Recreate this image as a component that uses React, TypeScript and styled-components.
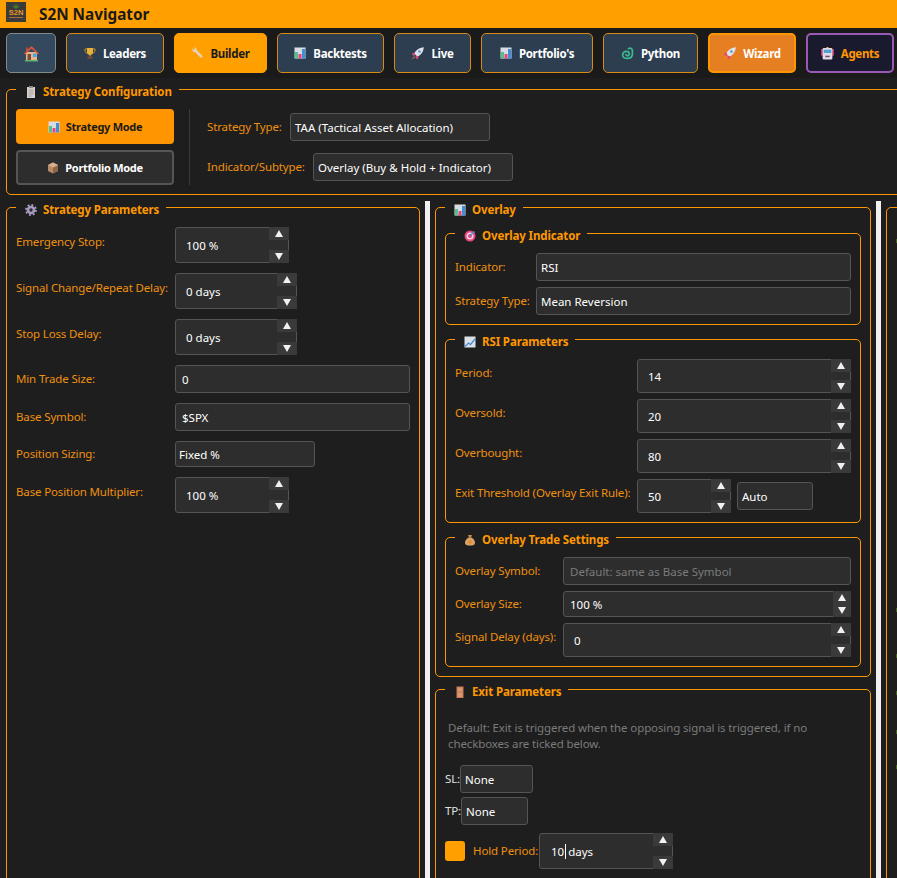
import React from 'react'
import styled, { createGlobalStyle } from 'styled-components'

const ORANGE = '#ff9800'
const FONT = `"Noto Sans", "Open Sans", Arial, sans-serif`

const GlobalStyle = createGlobalStyle`
    html, body {
        margin: 0;
        padding: 0;
        background: #1e1e1e;
        overflow: hidden;
    }
`

const Page = styled.div`
    width: 897px;
    height: 878px;
    overflow: hidden;
    background: #1e1e1e;
    font-family: ${FONT};
    font-size: 11.5px;
    color: #fff;
`

const Header = styled.header`
    height: 28px;
    box-sizing: border-box;
    background: #ff9f00;
    display: flex;
    align-items: flex-start;
    padding: 2px 0 0 6px;
    gap: 13px;
`

const Title = styled.h1`
    margin: 0;
    font-size: 15.3px;
    line-height: 24px;
    font-weight: 700;
    color: #1a1a1a;
`

const Nav = styled.nav`
    height: 50px;
    box-sizing: border-box;
    background: #1a1a1a;
    display: flex;
    padding: 5px 6px;
    gap: 10px;
`

const NavButton = styled.button<{ $w: number; $kind?: string }>`
    width: ${(p) => p.$w}px;
    flex: none;
    height: 40px;
    box-sizing: border-box;
    padding: 0;
    display: flex;
    align-items: center;
    justify-content: center;
    gap: 7px;
    font-family: ${FONT};
    font-size: 11.5px;
    letter-spacing: -0.3px;
    font-weight: 700;
    border-radius: 5px;
    border: 1px solid #d98a10;
    background: #2c3e50;
    color: #fff;
    ${(p) => p.$kind === 'home' && `background: #34495e; border-color: #7f8c8d;`}
    ${(p) => p.$kind === 'active' && `background: #ff9f00; border-color: #ff9f00; color: #1a1a1a;`}
    ${(p) => p.$kind === 'wizard' && `background: #e67e22; border: 2px solid #ff9800;`}
    ${(p) => p.$kind === 'agents' && `background: #1a1a2e; border: 2px solid #9b59b6; color: #ff9800;`}
`

const Content = styled.main`
    padding: 3px 0 0 6px;
`

const Group = styled.fieldset<{ $top?: number; $w?: number; $h?: number }>`
    margin: 0;
    min-width: 0;
    box-sizing: border-box;
    border: 1px solid ${ORANGE};
    border-radius: 5px;
    padding: ${(p) => p.$top ?? 12}px 9px 9px;
    ${(p) => p.$w && `width: ${p.$w}px;`}
    ${(p) => p.$h && `height: ${p.$h}px;`}
`

const Legend = styled.legend<{ $indent?: number }>`
    margin-left: ${(p) => p.$indent ?? 0}px;
    padding: 0 7px 0 9px;
    height: 16px;
    display: flex;
    align-items: center;
    gap: 6px;
    font-size: 11.5px;
    letter-spacing: -0.12px;
    line-height: 16px;
    font-weight: 700;
    color: ${ORANGE};
    white-space: nowrap;
    transform: translateY(3px);
`

const ConfigBody = styled.div`
    display: flex;
    align-items: stretch;
`

const ModeColumn = styled.div`
    width: 158px;
    display: flex;
    flex-direction: column;
    gap: 6px;
`

const ModeButton = styled.button<{ $on?: boolean }>`
    height: 35px;
    box-sizing: border-box;
    display: flex;
    align-items: center;
    justify-content: center;
    gap: 6px;
    font-family: ${FONT};
    font-size: 11px;
    letter-spacing: -0.3px;
    font-weight: 700;
    padding: 0;
    border-radius: 4px;
    border: ${(p) => (p.$on ? 'none' : '2px solid #555')};
    background: ${(p) => (p.$on ? '#ff9500' : '#2d2d2d')};
    color: ${(p) => (p.$on ? '#1a1a1a' : '#fff')};
`

const Divider = styled.div`
    width: 1px;
    background: #3a3a3a;
    margin: 0 17px 0 15px;
`

const ConfigForm = styled.div`
    display: flex;
    flex-direction: column;
    gap: 12px;
    padding-top: 4px;
`

const Columns = styled.div`
    display: grid;
    grid-template-columns: 414px 5px 436px 5px 80px;
    column-gap: 5px;
    align-items: start;
    margin-top: 4px;
`

const Splitter = styled.div`
    margin-top: 2px;
    height: 700px;
    background: #f0f0f0;
`

const Stack = styled.div<{ $gap?: number }>`
    display: flex;
    flex-direction: column;
    gap: ${(p) => p.$gap ?? 6}px;
`

const Row = styled.div<{ $mt?: number }>`
    display: flex;
    align-items: center;
    margin-top: ${(p) => p.$mt ?? 0}px;
`

const Label = styled.label<{ $w?: number; $lift?: boolean; $plain?: boolean }>`
    ${(p) => p.$w && `width: ${p.$w}px; flex: none;`}
    color: ${(p) => (p.$plain ? '#e0e0e0' : '#ee9010')};
    line-height: 16px;
    letter-spacing: -0.14px;
    white-space: nowrap;
    ${(p) => p.$lift && `margin-bottom: 6px;`}
`

const Field = styled.div<{ $w?: number; $h?: number; $pad?: number; $muted?: boolean; $ml?: number }>`
    box-sizing: border-box;
    ${(p) => (p.$w ? `width: ${p.$w}px; flex: none;` : `flex: 1;`)}
    height: ${(p) => p.$h ?? 28}px;
    padding-left: ${(p) => p.$pad ?? 4}px;
    margin-left: ${(p) => p.$ml ?? 0}px;
    display: flex;
    align-items: center;
    background: #2d2d2d;
    border: 1px solid #555;
    border-radius: 3px;
    color: ${(p) => (p.$muted ? '#7b7b7b' : '#fff')};
    white-space: nowrap;
`

const SpinBox = styled.div<{ $w?: number; $h?: number; $pad?: number }>`
    box-sizing: border-box;
    ${(p) => (p.$w ? `width: ${p.$w}px; flex: none;` : `flex: 1;`)}
    height: ${(p) => p.$h ?? 36}px;
    display: flex;
    background: #2d2d2d;
    border: 1px solid #555;
    border-radius: 3px;
    padding-left: ${(p) => p.$pad ?? 10}px;
`

const SpinValue = styled.div`
    flex: 1;
    display: flex;
    align-items: center;
    white-space: nowrap;
`

const Stepper = styled.div<{ $compact?: boolean }>`
    width: 20px;
    margin: -1px -1px -1px 0;
    display: flex;
    flex-direction: column;
    justify-content: ${(p) => (p.$compact ? 'center' : 'space-between')};
    gap: ${(p) => (p.$compact ? '6px' : '0')};
    ${(p) => p.$compact && `background: #3a3a3a; width: 18px;`}
`

const StepButton = styled.div<{ $compact?: boolean; $down?: boolean }>`
    height: ${(p) => (p.$compact ? '7px' : '13px')};
    display: flex;
    align-items: center;
    justify-content: center;
    background: #3a3a3a;
    &::after {
        content: '';
        width: 0;
        height: 0;
        border-left: 4.5px solid transparent;
        border-right: 4.5px solid transparent;
        ${(p) => (p.$down ? 'border-top' : 'border-bottom')}: 7px solid #f2f2f2;
    }
`

const Caret = styled.span`
    display: inline-block;
    width: 1px;
    height: 15px;
    background: #fff;
    margin: 0 2px 0 1px;
`

const Hint = styled.p`
    margin: 11px 0 13px 3px;
    line-height: 16px;
    letter-spacing: -0.12px;
    color: #7b7b7b;
`

const CheckBox = styled.div`
    width: 20px;
    height: 20px;
    flex: none;
    border-radius: 3px;
    background: #ff9f00;
    margin-right: 8px;
`

const EdgeMark = styled.div<{ $gap: number }>`
    width: 4px;
    height: 4px;
    margin-top: ${(p) => p.$gap}px;
    background: #3f5f1f;
`

const IconSvg = styled.svg<{ $s?: number }>`
    width: ${(p) => p.$s ?? 12}px;
    height: ${(p) => p.$s ?? 12}px;
    flex: none;
`

function Icon({ name, size }: { name: string; size?: number }) {
    const art: Record<string, React.ReactNode> = {
        home: (
            <>
                <rect x="3" y="7" width="11" height="8" fill="#e8b48c" />
                <path d="M1 8.500 8.500 1 16 8.500l-1.200 1L8.500 3.400 2.200 9.500z" fill="#e0523f" />
                <path d="M3 7V2.500h2V5z" fill="#b5523f" />
                <rect x="4.500" y="9" width="3.500" height="6" fill="#7a4b3a" />
                <rect x="10" y="8.500" width="3.500" height="3.500" fill="#3fa9e8" />
                <rect x="2" y="15" width="13" height="1.500" fill="#5fb36a" />
            </>
        ),
        trophy: (
            <>
                <path d="M1 2h10v1.500C11 5.500 9.500 6 9 6H3C2.500 6 1 5.500 1 3.500z" fill="none" stroke="#c9962b" strokeWidth="1" />
                <path d="M3 1h6v4c0 1.800-1.300 3-3 3S3 6.800 3 5z" fill="#e8b23a" />
                <rect x="5.300" y="8" width="1.400" height="1.500" fill="#c9962b" />
                <rect x="3.500" y="9.500" width="5" height="2.500" fill="#6b4a3a" />
            </>
        ),
        wrench: (
            <path d="M1.500 1.500 3 3l1-1-1.300-1.300C4.500.2 6 1.500 5.800 3.300l5.200 5.200c.6.6.6 1.400.1 1.900s-1.300.5-1.900-.1L4 5.100C2.200 5.500.6 3.500 1.500 1.500z" fill="#e8d3c0" />
        ),
        chart: (
            <>
                <rect x="0.500" y="0.500" width="11" height="11" fill="#d9dde3" />
                <rect x="1" y="5" width="3" height="6.500" fill="#4fc38a" />
                <rect x="4.500" y="7" width="3" height="4.500" fill="#e8457f" />
                <rect x="8" y="2" width="3" height="9.500" fill="#3f8fd8" />
            </>
        ),
        rocket: (
            <>
                <path d="M11.800.2C7.500.5 4.500 3 3 6l3 3c3-1.500 5.500-4.500 5.800-8.800z" fill="#dfe3ea" />
                <circle cx="7.800" cy="4.200" r="1.300" fill="#5f9fd8" />
                <path d="M3.500 5 .8 6l1 2 2-.5zM7 8.500 6 11.200 4 10.200l.5-2z" fill="#e8457f" />
                <path d="M3 8.500.3 11.700 3.500 9.500z" fill="#f08a3a" />
            </>
        ),
        python: (
            <path d="M7 1.500c2-1 3.500 0 3.500 2v3c0 2.500-2 4-4.500 4S1.500 9.500 1.500 7.500 3 4 5 4s3 1.500 2.500 3S5 8.500 4.500 7" fill="none" stroke="#3cb88f" strokeWidth="1.600" strokeLinecap="round" />
        ),
        robot: (
            <>
                <rect x="0" y="2" width="2" height="6" fill="#c03a6a" />
                <rect x="10" y="2" width="2" height="6" fill="#c03a6a" />
                <rect x="1.500" y="1" width="9" height="10.500" rx="1" fill="#e2dbe6" />
                <rect x="2.500" y="2.500" width="7" height="3" fill="#4f9fd8" />
                <rect x="4" y="8" width="4" height="1.400" fill="#6b4a6a" />
                <rect x="5" y="0" width="2" height="1" fill="#e8b23a" />
            </>
        ),
        clipboard: (
            <>
                <rect x="2" y="1" width="8" height="11" fill="#d8cfc8" />
                <rect x="4" y="0" width="4" height="2" fill="#8a8a8a" />
                <path d="M3.500 4h5M3.500 6h5M3.500 8h5M3.500 10h3" stroke="#9a9aa6" strokeWidth="0.800" />
            </>
        ),
        box: (
            <>
                <path d="M6 .5 11 3v6l-5 2.500L1 9V3z" fill="#b98a68" />
                <path d="M6 5.500 11 3v6l-5 2.500z" fill="#8f6548" />
                <path d="M6 .5 11 3 6 5.500 1 3z" fill="#d8b08e" />
            </>
        ),
        gear: (
            <>
                <circle cx="6" cy="6" r="4.300" fill="#a79bc0" />
                <circle cx="6" cy="6" r="5" fill="none" stroke="#a79bc0" strokeWidth="1.800" strokeDasharray="1.900 2" />
                <circle cx="6" cy="6" r="1.700" fill="#2a2a2e" />
            </>
        ),
        target: (
            <>
                <circle cx="6" cy="6" r="5.500" fill="#e8457f" />
                <circle cx="6" cy="6" r="3.500" fill="#f2d5e0" />
                <circle cx="6" cy="6" r="2" fill="#e8457f" />
                <path d="M6 6 10.500 1.500" stroke="#4f8fd8" strokeWidth="1.400" />
            </>
        ),
        line: (
            <>
                <rect x="0.500" y="0.500" width="11" height="11" fill="#dcdfe6" />
                <path d="M1 10.500 4.500 7l2 1.500L11 3" fill="none" stroke="#3f8fd8" strokeWidth="1.300" />
            </>
        ),
        bag: (
            <>
                <path d="M4.500 3.500C2 5 1 7 1 9c0 2 2 2.500 5 2.500S11 11 11 9c0-2-1-4-3.500-5.500z" fill="#d8a468" />
                <path d="M4 1h4L7 3.500H5z" fill="#c98a4a" />
                <circle cx="6" cy="8" r="1.700" fill="#e8862a" />
            </>
        ),
        door: (
            <>
                <rect x="2.500" y="0.500" width="7" height="11.500" fill="#c47a55" />
                <rect x="3.500" y="1.500" width="5" height="4" fill="#d8966e" />
                <rect x="3.500" y="6.500" width="5" height="4.500" fill="#d8966e" />
            </>
        ),
    }
    const box = name === 'home' ? '0 0 17 17' : '0 0 12 12'
    return (
        <IconSvg $s={size} viewBox={box}>
            {art[name]}
        </IconSvg>
    )
}

function Spin({
    w,
    h,
    pad,
    compact,
    children,
}: {
    w?: number
    h?: number
    pad?: number
    compact?: boolean
    children: React.ReactNode
}) {
    return (
        <SpinBox $w={w} $h={h} $pad={pad}>
            <SpinValue>{children}</SpinValue>
            <Stepper $compact={compact}>
                <StepButton $compact={compact} />
                <StepButton $compact={compact} $down />
            </Stepper>
        </SpinBox>
    )
}

const navItems = [
    { label: 'Leaders', icon: 'trophy', w: 98 },
    { label: 'Builder', icon: 'wrench', w: 93, kind: 'active' },
    { label: 'Backtests', icon: 'chart', w: 107 },
    { label: 'Live', icon: 'rocket', size: 13, w: 77 },
    { label: "Portfolio's", icon: 'chart', w: 112 },
    { label: 'Python', icon: 'python', size: 13, w: 95 },
    { label: 'Wizard', icon: 'rocket', size: 13, w: 88, kind: 'wizard' },
    { label: 'Agents', icon: 'robot', size: 13, w: 88, kind: 'agents' },
]

const edgeMarks = [12, 365, 42, 33, 35, 31]

export default function App() {
    return (
        <Page>
            <GlobalStyle />
            <Header>
                <svg width="20" height="20" viewBox="0 0 20 20">
                    <rect width="20" height="20" fill="#3a3a3a" />
                    <path d="M10 2v4M7 4l3 2 3-2" stroke="#4f7a2a" strokeWidth="1.500" fill="none" />
                    <text x="10" y="13" fontSize="7.500" fontWeight="700" textAnchor="middle" fill="#e8952a" fontFamily="Liberation Sans">
                        S2N
                    </text>
                    <rect x="3" y="15" width="14" height="1" fill="#a8702a" />
                </svg>
                <Title>S2N Navigator</Title>
            </Header>
            <Nav>
                <NavButton $w={50} $kind="home">
                    <Icon name="home" size={17} />
                </NavButton>
                {navItems.map((item) => (
                    <NavButton key={item.label} $w={item.w} $kind={item.kind}>
                        <Icon name={item.icon} size={item.size} />
                        {item.label}
                    </NavButton>
                ))}
            </Nav>
            <Content>
                <Group $w={940}>
                    <Legend>
                        <Icon name="clipboard" />
                        Strategy Configuration
                    </Legend>
                    <ConfigBody>
                        <ModeColumn>
                            <ModeButton $on>
                                <Icon name="chart" />
                                Strategy Mode
                            </ModeButton>
                            <ModeButton>
                                <Icon name="box" />
                                Portfolio Mode
                            </ModeButton>
                        </ModeColumn>
                        <Divider />
                        <ConfigForm>
                            <Row>
                                <Label $w={83}>Strategy Type:</Label>
                                <Field $w={200}>TAA (Tactical Asset Allocation)</Field>
                            </Row>
                            <Row>
                                <Label $w={106}>Indicator/Subtype:</Label>
                                <Field $w={200}>{'Overlay (Buy & Hold + Indicator)'}</Field>
                            </Row>
                        </ConfigForm>
                    </ConfigBody>
                </Group>
                <Columns>
                    <Group $h={720}>
                        <Legend>
                            <Icon name="gear" />
                            Strategy Parameters
                        </Legend>
                        <Stack $gap={10}>
                            <Row>
                                <Label $w={159} $lift>Emergency Stop:</Label>
                                <Spin w={114}>100 %</Spin>
                            </Row>
                            <Row>
                                <Label $w={159} $lift>Signal Change/Repeat Delay:</Label>
                                <Spin w={122}>0 days</Spin>
                            </Row>
                            <Row>
                                <Label $w={159} $lift>Stop Loss Delay:</Label>
                                <Spin w={122}>0 days</Spin>
                            </Row>
                            <Row>
                                <Label $w={159}>Min Trade Size:</Label>
                                <Field $pad={6}>0</Field>
                            </Row>
                            <Row>
                                <Label $w={159}>Base Symbol:</Label>
                                <Field $pad={6}>$SPX</Field>
                            </Row>
                            <Row>
                                <Label $w={159}>Position Sizing:</Label>
                                <Field $w={140} $h={26} $pad={3}>Fixed %</Field>
                            </Row>
                            <Row>
                                <Label $w={159} $lift>Base Position Multiplier:</Label>
                                <Spin w={114}>100 %</Spin>
                            </Row>
                        </Stack>
                    </Group>
                    <Splitter />
                    <Stack $gap={4}>
                        <Group $top={10}>
                            <Legend>
                                <Icon name="chart" />
                                Overlay
                            </Legend>
                            <Stack>
                                <Group>
                                    <Legend>
                                        <Icon name="target" />
                                        Overlay Indicator
                                    </Legend>
                                    <Stack>
                                        <Row>
                                            <Label $w={81}>Indicator:</Label>
                                            <Field>RSI</Field>
                                        </Row>
                                        <Row>
                                            <Label $w={81}>Strategy Type:</Label>
                                            <Field>Mean Reversion</Field>
                                        </Row>
                                    </Stack>
                                </Group>
                                <Group>
                                    <Legend>
                                        <Icon name="line" />
                                        RSI Parameters
                                    </Legend>
                                    <Stack>
                                        <Row>
                                            <Label $w={182} $lift>Period:</Label>
                                            <Spin h={34}>14</Spin>
                                        </Row>
                                        <Row>
                                            <Label $w={182} $lift>Oversold:</Label>
                                            <Spin h={34}>20</Spin>
                                        </Row>
                                        <Row>
                                            <Label $w={182} $lift>Overbought:</Label>
                                            <Spin h={34}>80</Spin>
                                        </Row>
                                        <Row>
                                            <Label $w={182} $lift>Exit Threshold (Overlay Exit Rule):</Label>
                                            <Spin w={94} h={34}>50</Spin>
                                            <Field $w={76} $ml={6}>Auto</Field>
                                        </Row>
                                    </Stack>
                                </Group>
                                <Group>
                                    <Legend>
                                        <Icon name="bag" />
                                        Overlay Trade Settings
                                    </Legend>
                                    <Stack>
                                        <Row>
                                            <Label $w={108}>Overlay Symbol:</Label>
                                            <Field $pad={6} $muted>Default: same as Base Symbol</Field>
                                        </Row>
                                        <Row>
                                            <Label $w={108}>Overlay Size:</Label>
                                            <Spin h={26} pad={6} compact>100 %</Spin>
                                        </Row>
                                        <Row>
                                            <Label $w={108} $lift>Signal Delay (days):</Label>
                                            <Spin h={34}>0</Spin>
                                        </Row>
                                    </Stack>
                                </Group>
                            </Stack>
                        </Group>
                        <Group $h={300}>
                            <Legend>
                                <Icon name="door" />
                                Exit Parameters
                            </Legend>
                            <Hint>
                                Default: Exit is triggered when the opposing signal is triggered, if no
                                <br />
                                checkboxes are ticked below.
                            </Hint>
                            <Stack $gap={4}>
                                <Row>
                                    <Label $w={15} $plain>SL:</Label>
                                    <Field $w={73}>None</Field>
                                </Row>
                                <Row>
                                    <Label $w={16} $plain>TP:</Label>
                                    <Field $w={67}>None</Field>
                                </Row>
                                <Row $mt={4}>
                                    <CheckBox />
                                    <Label $w={66}>Hold Period:</Label>
                                    <Spin w={134} pad={11}>
                                        10
                                        <Caret />
                                        days
                                    </Spin>
                                </Row>
                            </Stack>
                        </Group>
                    </Stack>
                    <Splitter />
                    <Group $h={720}>
                        <Legend $indent={20} />
                        {edgeMarks.map((gap, i) => (
                            <EdgeMark key={i} $gap={gap} />
                        ))}
                    </Group>
                </Columns>
            </Content>
        </Page>
    )
}
